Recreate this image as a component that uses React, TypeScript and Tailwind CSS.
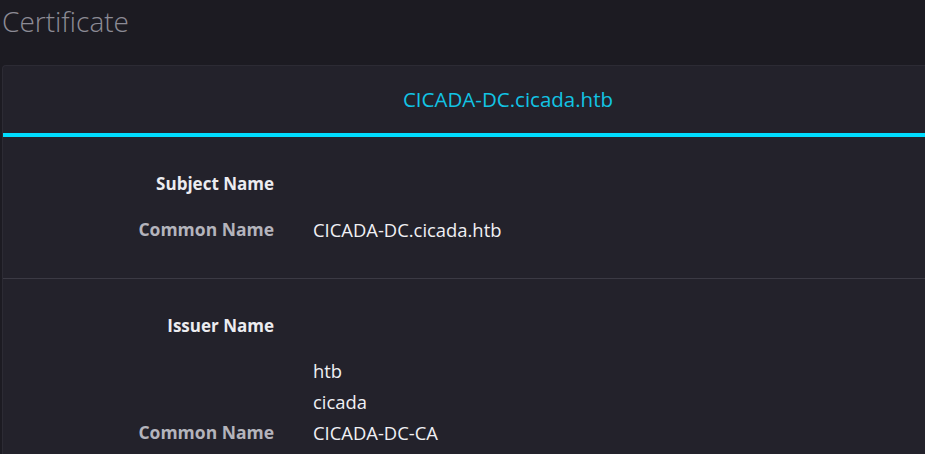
import React from "react";

type Row = { label: string; value: string };

const subject: Row[] = [{ label: "Common Name", value: "CICADA-DC.cicada.htb" }];

const issuer: Row[] = [
  { label: "", value: "htb" },
  { label: "", value: "cicada" },
  { label: "Common Name", value: "CICADA-DC-CA" },
];

function Section({ title, rows, last }: { title: string; rows: Row[]; last?: boolean }) {
  return (
    <section className={`pt-[34px] ${last ? "pb-[40px]" : "pb-[33px] border-b border-[#3b3a44]"}`}>
      {/* section heading */}
      <div className="grid grid-cols-[271px_1fr] gap-x-[39px] h-[26px] items-center">
        <h2 className="text-right font-bold text-[17px] text-[#ececf0]">{title}</h2>
        <span />
      </div>
      <div className={last ? "mt-[16px]" : "mt-[17px]"}>
        {rows.map((r, i) => (
          <div key={i} className="grid grid-cols-[271px_1fr] gap-x-[39px] h-[31px] items-center">
            <span className="text-right font-bold text-[17.5px] text-[#b4b4bc]">{r.label}</span>
            <span className="text-[18.4px] text-[#f0f0f4]">{r.value}</span>
          </div>
        ))}
      </div>
    </section>
  );
}

export default function App() {
  return (
    <div
      className="w-[925px] h-[454px] overflow-hidden bg-[#1c1b22]"
      style={{ fontFamily: '"Open Sans", "Noto Sans", sans-serif' }}
    >
      <h1 className="pl-[2px] pt-[2px] h-[65px] text-[28px] font-light leading-[38px] text-[#8c8b95]">
        Certificate
      </h1>

      <div className="ml-[2px] bg-[#23222b] rounded-tl-[4px] border-l border-t border-[#2c2b34]">
        {/* tab header */}
        <div className="h-[67px] flex items-center justify-center pl-[88px]">
          <span className="text-[20.5px] text-[#12c4e4]">CICADA-DC.cicada.htb</span>
        </div>
        <div className="h-[4px] bg-[#00ddff]" />

        <Section title="Subject Name" rows={subject} />
        <Section title="Issuer Name" rows={issuer} last />
      </div>
    </div>
  );
}
